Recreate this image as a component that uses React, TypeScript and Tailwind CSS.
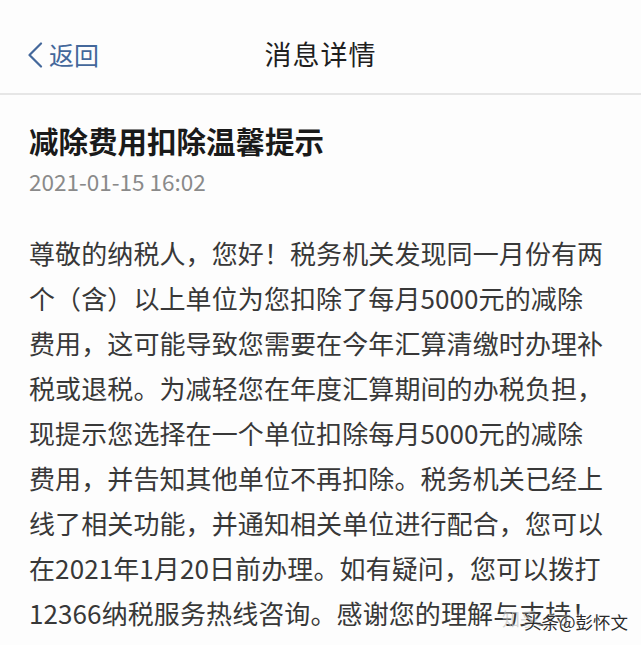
const bodyLines = [
  "尊敬的纳税人，您好！税务机关发现同一月份有两",
  "个（含）以上单位为您扣除了每月5000元的减除",
  "费用，这可能导致您需要在今年汇算清缴时办理补",
  "税或退税。为减轻您在年度汇算期间的办税负担，",
  "现提示您选择在一个单位扣除每月5000元的减除",
  "费用，并告知其他单位不再扣除。税务机关已经上",
  "线了相关功能，并通知相关单位进行配合，您可以",
  "在2021年1月20日前办理。如有疑问，您可以拨打",
  "12366纳税服务热线咨询。感谢您的理解与支持！",
];

const cjk = { fontFamily: '"Noto Sans CJK SC", "Noto Sans", sans-serif' };

export default function App() {
  return (
    <div className="relative h-[645px] w-[641px] overflow-hidden bg-[#fdfdfd]" style={cjk}>
      <header className="grid h-[95px] grid-cols-[1fr_auto_1fr] items-center border-b-2 border-[#e6e6e6] px-[26px] pt-[16px]">
        <div className="flex items-center text-[#44689b]">
          <svg width="18" height="26" viewBox="0 0 18 26" fill="none">
            <path d="M15 1.5 L3.5 13 L15 24.5" stroke="currentColor" strokeWidth="2.2" strokeLinecap="round" strokeLinejoin="round" />
          </svg>
          <span className="ml-[5px] text-[25px] leading-none">返回</span>
        </div>
        <h1 className="text-[27px] font-normal tracking-[1px] text-[#1f1f1f]">消息详情</h1>
        <div />
      </header>

      <main className="px-[29px]">
        <h2 className="pt-[25px] text-[29.5px] font-bold leading-[40px] text-[#1a1a1a]">减除费用扣除温馨提示</h2>
        <p className="mt-[6px] text-[22.5px] leading-[30px] text-[#8a8a8a]">2021-01-15 16:02</p>
        <div className="mt-[34px] text-[26px] leading-[45px] text-[#383838]">
          {bodyLines.map((l) => (
            <div key={l} className="whitespace-nowrap tracking-[0.1px]">
              {l}
            </div>
          ))}
        </div>
      </main>

      <div className="absolute left-[502px] top-[609px] whitespace-nowrap text-[18px] leading-none text-[#c4c4c4]/70">知乎</div>
      <div className="absolute left-[524px] top-[613px] whitespace-nowrap text-[17.5px] leading-none text-[#2a2a2a] [text-shadow:0_0_3px_#fff,0_0_3px_#fff]">
        头条@彭怀文
      </div>
    </div>
  );
}
